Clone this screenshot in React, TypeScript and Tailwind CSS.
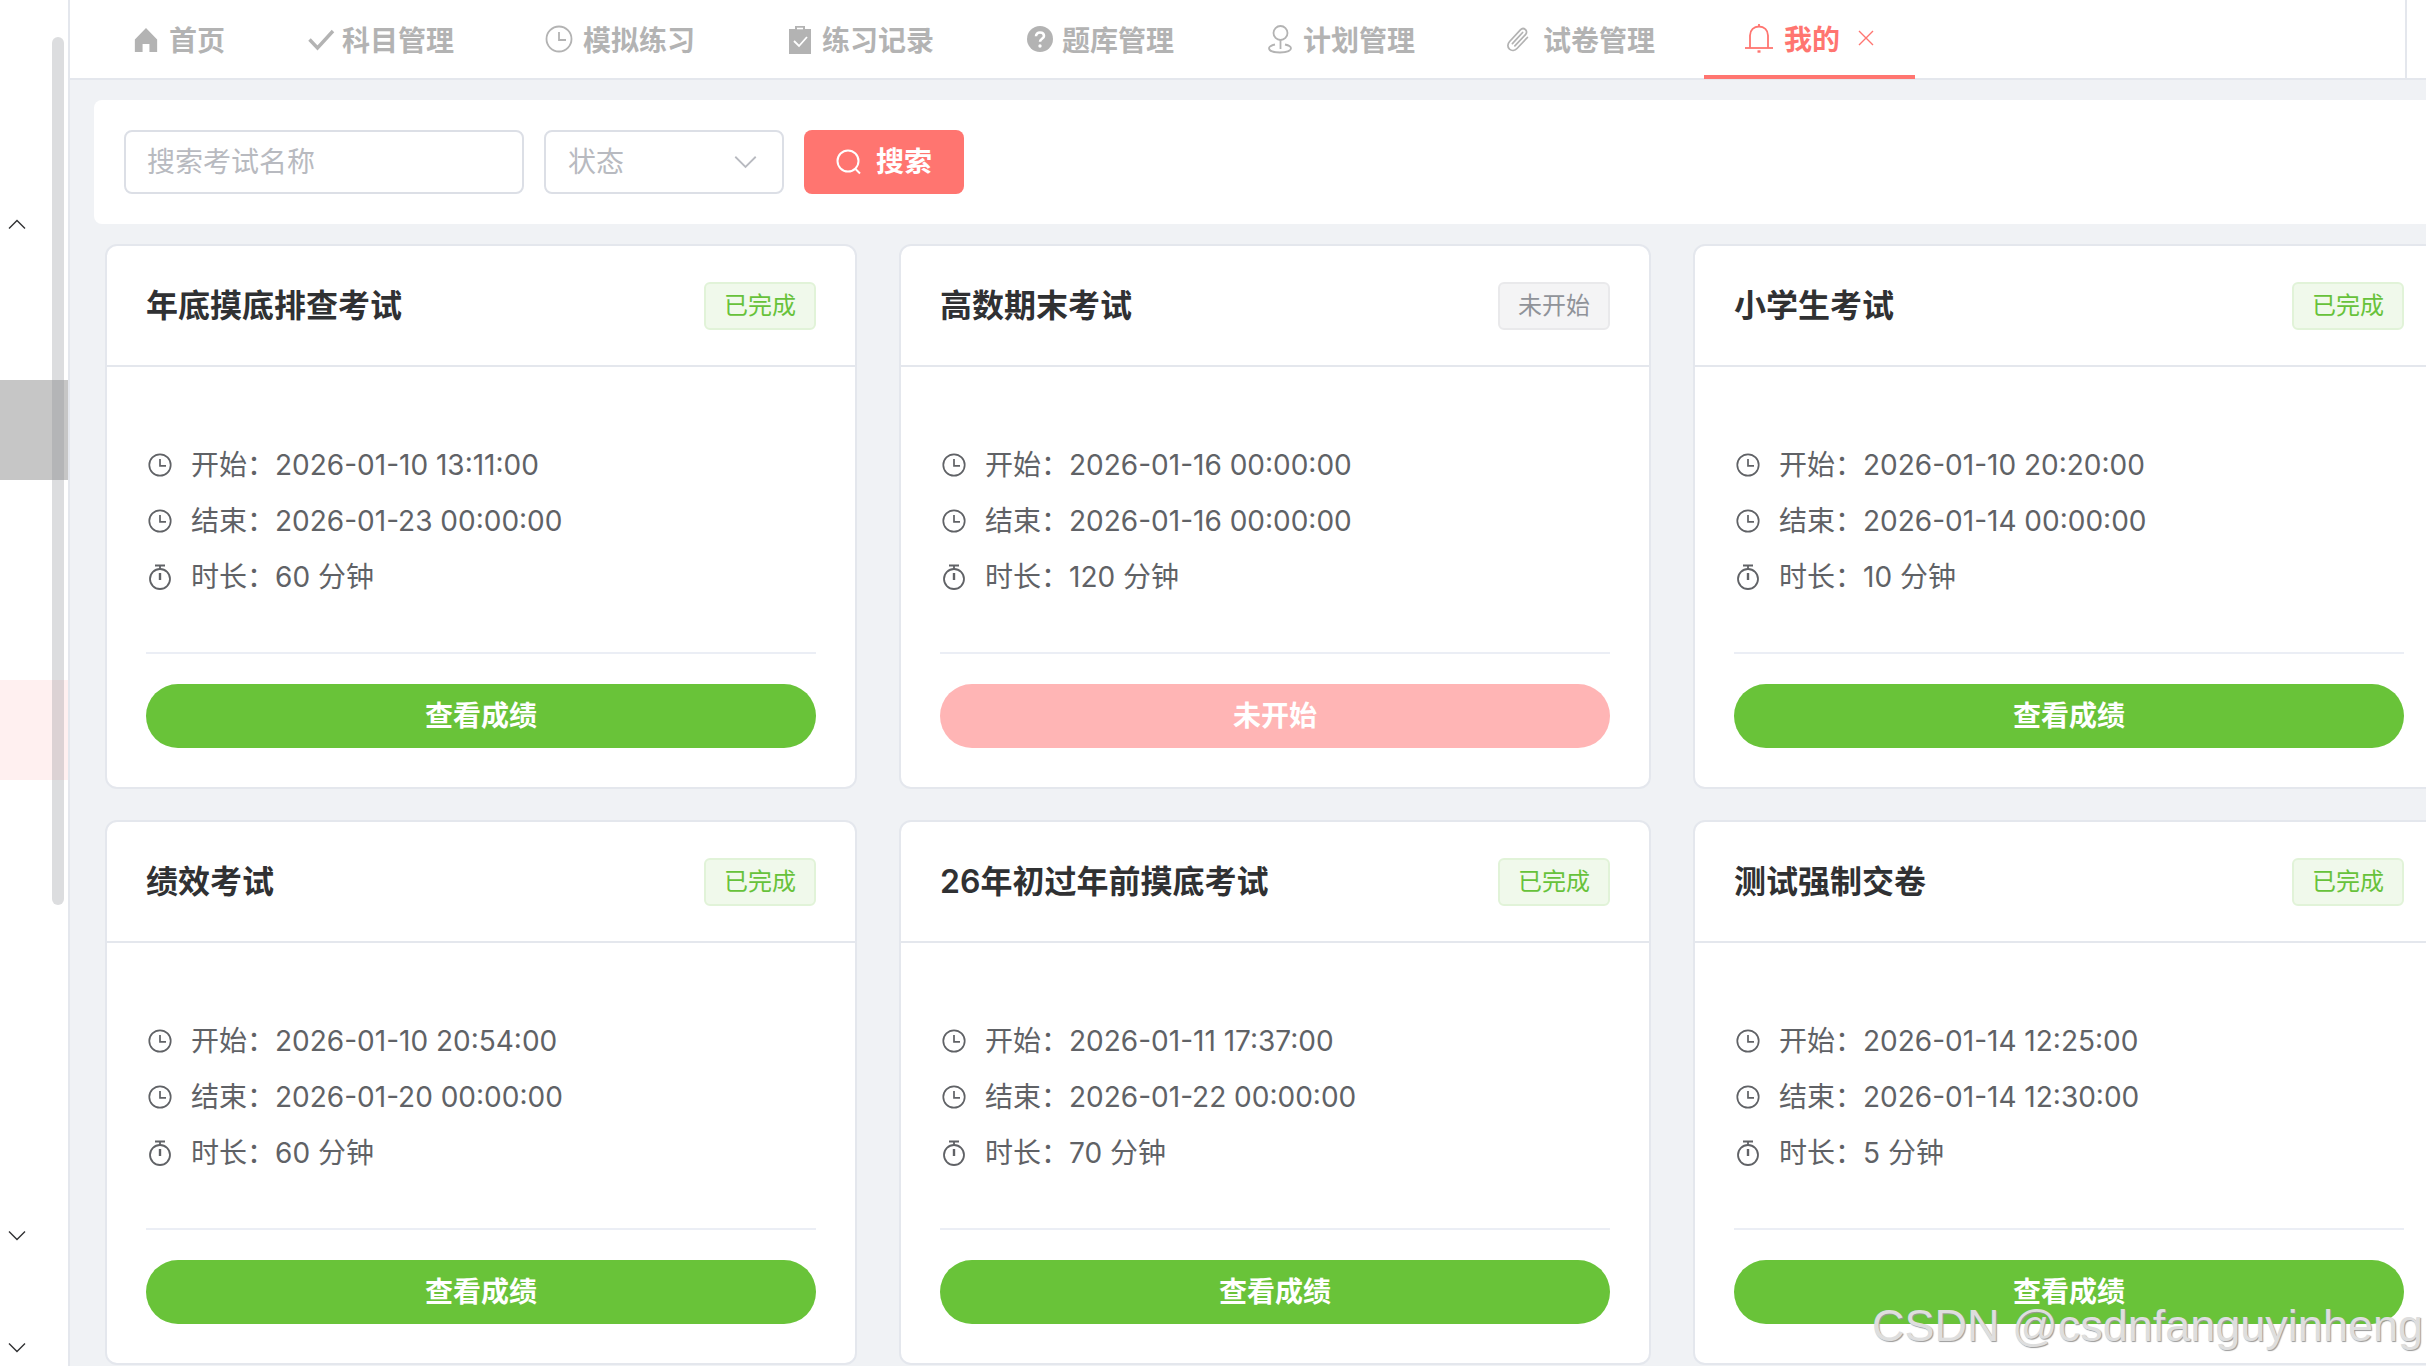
import type { ReactNode } from 'react';

const FONT = "font-['Inter','Noto_Sans_CJK_SC',sans-serif]";

const HomeIcon = () => (
  <svg viewBox="0 0 28 28" className="h-7 w-[24px]" fill="currentColor" preserveAspectRatio="none">
    <path d="M14 3 1 14.500V27h9v-8h8v8h9V14.500z" />
  </svg>
);

const CheckIcon = () => (
  <svg viewBox="0 0 28 28" className="h-7 w-7" fill="none" stroke="currentColor" strokeWidth="3.4">
    <path d="M2.500 14.500 10.500 23 26 6" />
  </svg>
);

const ClockIcon = ({ size = 'h-7 w-7', sw = 1.8 }: { size?: string; sw?: number }) => (
  <svg viewBox="0 0 28 28" className={size} fill="none" stroke="currentColor" strokeWidth={sw}>
    <circle cx="14" cy="14" r="12.500" />
    <path d="M14 7v8h7" />
  </svg>
);

const StopwatchIcon = () => (
  <svg viewBox="0 0 24 28" className="h-7 w-6" fill="none" stroke="currentColor" strokeWidth="1.8">
    <circle cx="12" cy="16" r="10" />
    <path d="M7 2.500h10M12 2.500V6" />
    <path d="M12 10v7" strokeWidth="2.400" />
  </svg>
);

const ClipboardIcon = () => (
  <svg viewBox="0 0 22 30" className="h-[30px] w-[22px]">
    <path d="M0 5h6V2h10v3h6v25H0z" fill="currentColor" />
    <path d="M5 17l5 5 8-9" fill="none" stroke="#fff" strokeWidth="1.800" />
    <path d="M8 4.500h6" stroke="#fff" strokeWidth="1.600" />
  </svg>
);

const HelpIcon = () => (
  <svg viewBox="0 0 26 26" className="h-[26px] w-[26px]">
    <circle cx="13" cy="13" r="13" fill="currentColor" />
    <path d="M9 10.200c0-2.400 1.800-3.700 4-3.700s4 1.300 4 3.400c0 2.800-4 2.900-4 5.800" fill="none" stroke="#fff" strokeWidth="2.600" />
    <circle cx="13" cy="20" r="1.700" fill="#fff" />
  </svg>
);

const PinIcon = () => (
  <svg viewBox="0 0 24 30" className="h-[30px] w-6" fill="none" stroke="currentColor" strokeWidth="1.800">
    <circle cx="12.500" cy="9" r="7" />
    <path d="M12.500 16v9" />
    <path d="M7 20.500c-3.500.8-6 2-6 3.800C1 26.900 6 28.500 12 28.500s11-1.600 11-4.200c0-1.800-2.500-3-6-3.800" />
  </svg>
);

const PaperclipIcon = () => (
  <svg viewBox="0 0 24 24" className="h-[30px] w-[30px]" fill="none" stroke="currentColor" strokeWidth="1.400" strokeLinecap="round">
    <path d="M9.500 17.500 18 8.500c1.200-1.300 1.100-3-.1-4.100-1.200-1-2.900-.9-4 .3L5.300 14c-1.900 2-1.800 4.600-.1 6.100 1.800 1.500 4.300 1.300 6-.5l8.300-8.800" />
    <path d="m7.500 15.700 8.200-8.900" />
  </svg>
);

const BellIcon = () => (
  <svg viewBox="0 0 28 30" className="h-[30px] w-7" fill="none" stroke="currentColor" strokeWidth="1.800">
    <path d="M5 25V12.500C5 7 9 3.500 14 3.500S23 7 23 12.500V25" />
    <path d="M0 25h28" />
    <path d="M14 1v2.500" />
    <path d="M12.500 28.500h3" strokeWidth="2.400" />
  </svg>
);

const SearchIcon = () => (
  <svg viewBox="0 0 26 26" className="h-[26px] w-[26px]" fill="none" stroke="currentColor" strokeWidth="2">
    <circle cx="12" cy="12" r="10.500" />
    <path d="M19.500 20 24 24.500" />
  </svg>
);

const Chevron = ({ up = false, className = 'h-[10px] w-[18px]' }: { up?: boolean; className?: string }) => (
  <svg viewBox="0 0 18 10" className={className} fill="none" stroke="currentColor" strokeWidth="1.400">
    <path d={up ? 'M1 9.500 9 1.500l8 8' : 'M1 .5l8 8 8-8'} />
  </svg>
);

interface Tab {
  label: string;
  icon: ReactNode;
  box: string;
}

const tabs: Tab[] = [
  { label: '首页', icon: <HomeIcon />, box: 'w-[35px]' },
  { label: '科目管理', icon: <CheckIcon />, box: 'w-[35px]' },
  { label: '模拟练习', icon: <ClockIcon />, box: 'w-[47px] pl-[9px]' },
  { label: '练习记录', icon: <ClipboardIcon />, box: 'w-[45px] pl-[12px]' },
  { label: '题库管理', icon: <HelpIcon />, box: 'w-[46px] pl-[11px]' },
  { label: '计划管理', icon: <PinIcon />, box: 'w-[47px] pl-[12px]' },
  { label: '试卷管理', icon: <PaperclipIcon />, box: 'w-[46px] pl-[6px]' },
];

interface Exam {
  title: string;
  start: string;
  end: string;
  minutes: number;
  done: boolean;
}

const exams: Exam[] = [
  { title: '年底摸底排查考试', start: '2026-01-10 13:11:00', end: '2026-01-23 00:00:00', minutes: 60, done: true },
  { title: '高数期末考试', start: '2026-01-16 00:00:00', end: '2026-01-16 00:00:00', minutes: 120, done: false },
  { title: '小学生考试', start: '2026-01-10 20:20:00', end: '2026-01-14 00:00:00', minutes: 10, done: true },
  { title: '绩效考试', start: '2026-01-10 20:54:00', end: '2026-01-20 00:00:00', minutes: 60, done: true },
  { title: '26年初过年前摸底考试', start: '2026-01-11 17:37:00', end: '2026-01-22 00:00:00', minutes: 70, done: true },
  { title: '测试强制交卷', start: '2026-01-14 12:25:00', end: '2026-01-14 12:30:00', minutes: 5, done: true },
];

function Row({ icon, label, value }: { icon: ReactNode; label: string; value: string }) {
  return (
    <div className="flex h-14 items-center text-[28px] text-[#606266]">
      <span className="flex w-[45px] shrink-0 pl-[2px]">{icon}</span>
      <span>{label}：</span>
      <span>{value}</span>
    </div>
  );
}

function ExamCard({ exam }: { exam: Exam }) {
  return (
    <div className="flex h-[545px] flex-col rounded-xl border-2 border-[#e4e7ed] bg-white">
      <div className="flex h-[121px] shrink-0 items-center justify-between border-b-2 border-[#e4e7ed] px-[39px]">
        <h3 className="pt-px text-[32px] font-semibold text-[#303133]">{exam.title}</h3>
        {exam.done ? (
          <span className="flex h-12 w-[112px] items-center justify-center rounded-md border-2 border-[#e1f3d8] bg-[#f0f9eb] text-2xl text-[#67c23a]">
            已完成
          </span>
        ) : (
          <span className="flex h-12 w-[112px] items-center justify-center rounded-md border-2 border-[#e9e9eb] bg-[#f4f4f5] text-2xl text-[#909399]">
            未开始
          </span>
        )}
      </div>
      <div className="flex flex-1 flex-col px-[39px] pt-[70px]">
        <Row icon={<ClockIcon size="h-6 w-6" sw={2} />} label="开始" value={exam.start} />
        <Row icon={<ClockIcon size="h-6 w-6" sw={2} />} label="结束" value={exam.end} />
        <Row icon={<StopwatchIcon />} label="时长" value={`${exam.minutes} 分钟`} />
        <div className="mt-[47px] border-t-2 border-[#ebeef5]" />
        <button
          className={`mt-[30px] h-16 rounded-[32px] text-[28px] font-semibold text-white ${exam.done ? 'bg-[#69c339]' : 'bg-[#ffb5b5]'}`}
        >
          {exam.done ? '查看成绩' : '未开始'}
        </button>
      </div>
    </div>
  );
}

export default function App() {
  return (
    <div className={`relative flex h-[1366px] w-[2426px] overflow-hidden bg-white ${FONT}`}>
      {/* Side menu, scrollbar track lies over it */}
      <aside className="relative flex w-[70px] shrink-0 flex-col border-r-2 border-[#e4e7ed] bg-white text-[#303133]">
        <div className="ml-2 mt-[219px]"><Chevron up /></div>
        <div className="mt-[151px] h-[100px] bg-[#c6c6c6]" />
        <div className="mt-[200px] h-[100px] bg-[#fff0f0]" />
        <div className="ml-2 mt-[451px]"><Chevron /></div>
        <div className="ml-2 mt-[102px]"><Chevron /></div>
        <div className="absolute left-[52px] top-[37px] h-[868px] w-[12px] rounded-full bg-[#8a8d94]/30" />
      </aside>

      <main className="flex min-w-0 flex-1 flex-col bg-[#f0f2f5]">
        {/* Tab bar */}
        <div className="flex h-20 shrink-0 border-b-2 border-[#e4e7ed] bg-white pl-[23px]">
          {tabs.map((tab) => (
            <div key={tab.label} className="flex items-center px-[41px] text-[28px] font-semibold text-[#b3b3b3]">
              <span className={`flex shrink-0 ${tab.box}`}>{tab.icon}</span>
              <span className="pt-1">{tab.label}</span>
            </div>
          ))}
          <div className="-mb-px ml-2 flex items-center border-b-[4px] border-[#ff7570] px-[41px] text-[28px] font-semibold text-[#ff7570]">
            <BellIcon />
            <span className="ml-[11px] pt-1">我的</span>
            <svg viewBox="0 0 16 16" className="ml-[18px] h-4 w-4" fill="none" stroke="currentColor" strokeWidth="1.400">
              <path d="m1 1 14 14M15 1 1 15" />
            </svg>
          </div>
          <div className="ml-auto mr-[19px] w-[2px] bg-[#e4e7ed]" />
        </div>

        {/* Search bar */}
        <div className="ml-6 mt-5 flex h-[124px] w-[2400px] shrink-0 items-center gap-5 rounded-lg bg-white pl-[30px]">
          <div className="flex h-16 w-[400px] items-center rounded-lg border-2 border-[#dcdfe6] pl-[21px] text-[28px] text-[#b8bac0]">
            搜索考试名称
          </div>
          <div className="flex h-16 w-[240px] items-center justify-between rounded-lg border-2 border-[#dcdfe6] pl-[22px] pr-[25px] text-[28px] text-[#b8bac0]">
            状态
            <Chevron className="h-[13px] w-[23px]" />
          </div>
          <button className="flex h-16 w-[160px] items-center gap-[14px] rounded-lg bg-[#ff7570] pl-[32px] text-[28px] font-semibold text-white">
            <SearchIcon />
            搜索
          </button>
        </div>

        {/* Exam cards */}
        <div className="ml-[35px] mt-5 grid w-[2340px] shrink-0 grid-cols-[repeat(3,752px)] gap-x-[42px] gap-y-[31px]">
          {exams.map((exam) => (
            <ExamCard key={exam.title} exam={exam} />
          ))}
        </div>
      </main>

      <div className="pointer-events-none absolute left-[1872px] top-[1303px] whitespace-nowrap font-['Liberation_Sans',sans-serif] text-[45px] leading-none text-[#dedede] [text-shadow:1px_1px_1px_#9a9a9a]">
        CSDN @csdnfanguyinheng
      </div>
    </div>
  );
}
